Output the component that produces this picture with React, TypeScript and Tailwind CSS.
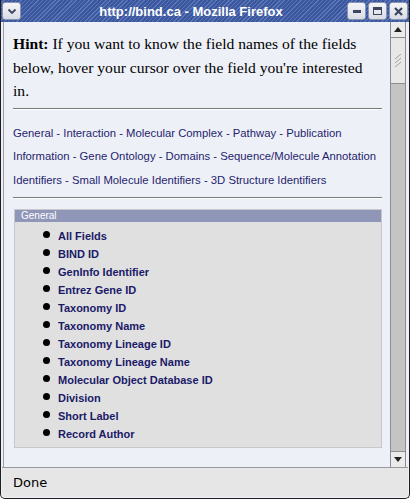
const links = [
  "General",
  "Interaction",
  "Molecular Complex",
  "Pathway",
  "Publication Information",
  "Gene Ontology",
  "Domains",
  "Sequence/Molecule Annotation Identifiers",
  "Small Molecule Identifiers",
  "3D Structure Identifiers",
]

const fields = [
  "All Fields",
  "BIND ID",
  "GenInfo Identifier",
  "Entrez Gene ID",
  "Taxonomy ID",
  "Taxonomy Name",
  "Taxonomy Lineage ID",
  "Taxonomy Lineage Name",
  "Molecular Object Database ID",
  "Division",
  "Short Label",
  "Record Author",
]

function TitleButton({ children }: { children: React.ReactNode }) {
  return (
    <div className="w-[19px] h-[18px] rounded-[3px] border border-[#8a93b0] bg-[linear-gradient(#f4f5f8,#d9dce5)] flex items-center justify-center">
      {children}
    </div>
  )
}

export default function App() {
  return (
    <div className="w-[410px] h-[499px] flex flex-col overflow-hidden bg-[#eef0f7] border-x border-b border-[#1e1e1e] rounded-b-[5px] font-['DejaVu_Sans',sans-serif]">
      {/* title bar */}
      <div className="h-[22px] shrink-0 flex items-center px-[1px] bg-[repeating-linear-gradient(135deg,#3b589e_0px,#3b589e_2px,#5a76b8_2px,#5a76b8_3px)]">
        <TitleButton>
          <svg width="10" height="7" viewBox="0 0 10 7">
            <path d="M1.5 1.5 L5 5 L8.5 1.5" fill="none" stroke="#3c4660" strokeWidth="1.8" />
          </svg>
        </TitleButton>
        <div className="flex-1 text-center text-white font-bold text-[13px] leading-none pl-[14px] font-['Liberation_Sans',sans-serif]">
          http://bind.ca - Mozilla Firefox
        </div>
        <div className="flex gap-[2px]">
          <TitleButton>
            <div className="w-[8px] h-[3px] bg-[#3c4660]" />
          </TitleButton>
          <TitleButton>
            <div className="w-[9px] h-[8px] border border-[#3c4660] border-t-[3px]" />
          </TitleButton>
          <TitleButton>
            <svg width="9" height="9" viewBox="0 0 9 9">
              <path d="M1 1 L8 8 M8 1 L1 8" stroke="#3c4660" strokeWidth="2.2" />
            </svg>
          </TitleButton>
        </div>
      </div>

      {/* body */}
      <div className="flex-1 flex min-h-0 pl-[2px] pr-[3px]">
        <div className="flex-1 min-w-0 overflow-hidden border-l border-[#9a9aa8]">
          <div className="pl-[9px] pr-[8px] pt-[10px]">
            <p className="font-['Liberation_Serif',serif] text-[15.6px] leading-[23.5px] text-black whitespace-nowrap">
              <b>Hint:</b> If you want to know the field names of the fields
              <br />
              below, hover your cursor over the field you're interested
              <br />
              in.
            </p>
            <div className="mt-[5px] h-[1px] bg-[#7a7a7a] border-b border-white box-content" />
            <div className="mt-[12px] font-['Liberation_Sans',sans-serif] text-[11.3px] leading-[23.5px] text-[#1e1e6e]">
              {links.map((l, i) => (
                <span key={l}>
                  {l}
                  {i < links.length - 1 && " - "}
                </span>
              ))}
            </div>
            <div className="mt-[5px] h-[1px] bg-[#7a7a7a] border-b border-white box-content" />
            <div className="mt-[10px] ml-[1px] border border-[#c8c8cc] bg-[#e0e0e0] pb-[4px]">
              <div className="h-[12px] bg-[#9096b8] text-white text-[10px] leading-[12px] pl-[6px] font-['Liberation_Sans',sans-serif]">
                General
              </div>
              <div className="pt-[5px]">
                {fields.map((f) => (
                  <div key={f} className="flex items-center h-[18px]">
                    <div className="w-[7px] h-[7px] rounded-full bg-black ml-[28px] -mt-[3px]" />
                    <span className="ml-[8px] font-['Liberation_Sans',sans-serif] font-bold text-[11px] text-[#1a1a68]">
                      {f}
                    </span>
                  </div>
                ))}
              </div>
            </div>
          </div>
        </div>

        {/* scrollbar */}
        <div className="w-[16px] shrink-0 flex flex-col border-x border-[#8c8c8c] bg-[#c4c4c4]">
          <div className="h-[16px] shrink-0 bg-[#ebebeb] border-b border-[#8c8c8c] flex items-center justify-center">
            <svg width="8" height="5" viewBox="0 0 8 5">
              <path d="M0 5 L4 0 L8 5 Z" fill="#222" />
            </svg>
          </div>
          <div className="h-[46px] shrink-0 bg-[#e8e8e8] border-b border-[#8c8c8c] flex items-center justify-center">
            <svg width="8" height="14" viewBox="0 0 8 14">
              <path d="M1 5 L7 0 M1 9 L7 4 M1 13 L7 8" stroke="#a0a0a0" strokeWidth="1" />
            </svg>
          </div>
          <div className="flex-1" />
          <div className="h-[16px] shrink-0 bg-[#ebebeb] border-t border-[#8c8c8c] flex items-center justify-center">
            <svg width="8" height="5" viewBox="0 0 8 5">
              <path d="M0 0 L4 5 L8 0 Z" fill="#222" />
            </svg>
          </div>
        </div>
      </div>

      {/* status bar */}
      <div className="h-[30px] shrink-0 mx-[1px] mb-[1px] bg-[#e6e6e6] border-t border-[#9a9a9a] rounded-b-[4px] flex items-center pl-[11px] text-[13px] text-black">
        Done
      </div>
    </div>
  )
}
